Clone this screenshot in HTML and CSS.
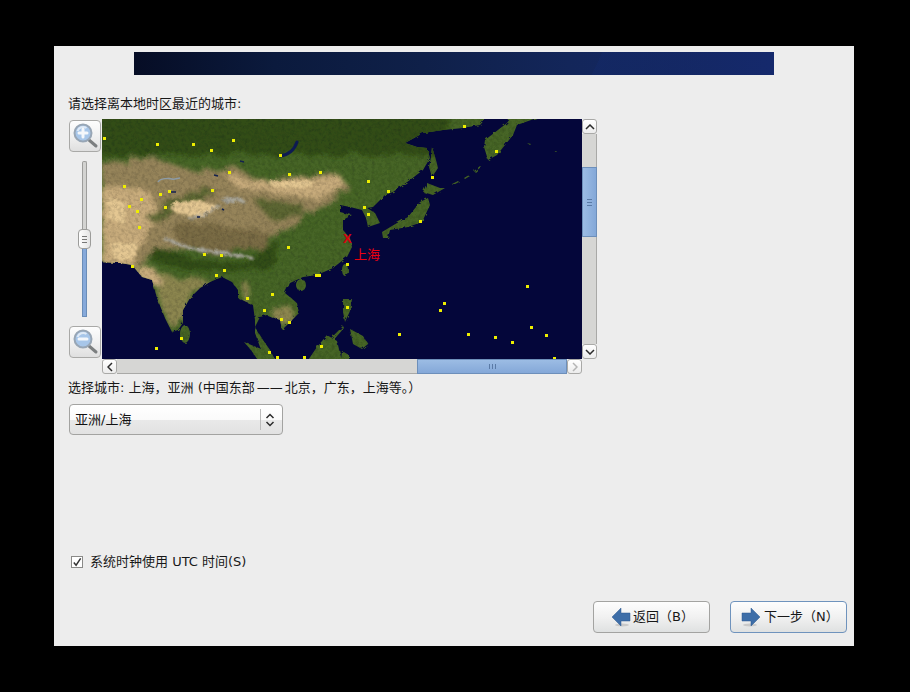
FILE: index.html
```html
<!DOCTYPE html>
<html lang="zh-CN">
<head>
<meta charset="utf-8">
<title>时区选择</title>
<link rel="stylesheet" href="styles.css">
</head>
<body>
<main class="panel">
  <div class="banner"></div>
  <p class="prompt">请选择离本地时区最近的城市:</p>
  <div class="map-area">
    <div class="zoom-col">
      <button class="zoom-btn" aria-label="放大">
        <svg width="28" height="28" viewBox="0 0 28 28"><path class="lens-handle" d="M18 18l7 6"/><circle class="lens-ring" cx="12" cy="11" r="8.500"/><path class="lens-shine" d="M6.500 9a6 6 0 0 1 9-3"/><path class="lens-mark" d="M12 7v8M8 11h8"/></svg>
      </button>
      <div class="slider">
        <div class="slider-top"></div>
        <div class="slider-handle"><span></span><span></span><span></span></div>
        <div class="slider-low"></div>
      </div>
      <button class="zoom-btn" aria-label="缩小">
        <svg width="28" height="28" viewBox="0 0 28 28"><path class="lens-handle" d="M18 18l7 6"/><circle class="lens-ring" cx="12" cy="11" r="8.500"/><path class="lens-shine" d="M6.500 9a6 6 0 0 1 9-3"/><path class="lens-mark" d="M8 11h8"/></svg>
      </button>
    </div>
    <div class="map-wrap">
      <div class="map-row">
        <div class="map">
          <svg class="map-svg" width="480" height="240" viewBox="0 0 480 240">
            <defs>
              <clipPath id="land">
                <path d="M-10-10H392L378 6 361 9 341 11 321 14 303 24 315 28 325 29 328 39 321 51 308 61 291 73 283 76 271 88 265 89 273 94 278 104 266 108 264 99 260 91 248 88 238 86 238 93 250 96 241 101 241 111 248 119 250 128 245 138 241 141 231 149 215 156 201 158 188 164 183 174 195 184 197 194 188 203 180 211 178 201 165 196 158 198 153 208 161 221 168 231 178 250H172L158 228 153 214 153 201 151 186 136 179 136 171 130 163 120 158 108 163 98 169 88 179 81 191 81 204 76 211 70 213 63 199 55 179 50 161 40 158 30 146 18 144-10 143Z"/>
                <ellipse cx="83" cy="215" rx="5" ry="9"/>
                <ellipse cx="199" cy="166" rx="5" ry="6"/>
                <ellipse cx="243" cy="151" rx="3" ry="6"/>
                <path d="M241 180 250 180 248 192 243 203 241 193Z"/>
                <path d="M248 210 261 217 266 225 260 230 251 225Z"/>
                <path d="M228 220 241 207 242 209 230 223Z"/>
                <path d="M225 216 235 222 242 250H200L215 228Z"/>
                <path d="M142 223 169 234 179 250H162L149 231Z"/>
                <path d="M240 232 247 236V250H238Z"/>
                <path d="M280 113 295 104 306 98 318 83 326 79 328 86 320 103 306 108 288 111 286 119 281 119Z"/>
                <path d="M321 73 325 64 338 69 343 69 331 76Z"/>
                <path d="M330 28 334 41 336 49 330 58 327 48 329 38Z"/>
                <path d="M383 21 405 4 415-10H460L415 6 411 16 395 36 386 41 382 28Z"/>
                <path d="M350 65 356 62 357 63 351 66ZM362 59 367 56 368 57 363 60ZM372 52 378 47 379 48 373 53ZM425 24 429 25 428 26ZM452 32 456 33 455 34Z"/>
              </clipPath>
              <filter id="coast" x="-2%" y="-2%" width="104%" height="104%">
                <feTurbulence type="fractalNoise" baseFrequency=".22" numOctaves="2" seed="7" result="n"/>
                <feDisplacementMap in="SourceGraphic" in2="n" scale="3"/>
              </filter>
              <filter id="rough" x="-5%" y="-5%" width="110%" height="110%">
                <feTurbulence type="fractalNoise" baseFrequency=".07" numOctaves="3" seed="4" result="n"/>
                <feDisplacementMap in="SourceGraphic" in2="n" scale="12" result="d"/>
                <feGaussianBlur in="d" stdDeviation="2.200"/>
              </filter>
              <filter id="fine" x="-5%" y="-5%" width="110%" height="110%">
                <feTurbulence type="fractalNoise" baseFrequency=".16" numOctaves="2" seed="12" result="n"/>
                <feDisplacementMap in="SourceGraphic" in2="n" scale="6" result="d"/>
                <feGaussianBlur in="d" stdDeviation="1"/>
              </filter>
              <filter id="speckle" x="0" y="0" width="100%" height="100%">
                <feTurbulence type="fractalNoise" baseFrequency=".3" numOctaves="2" seed="9"/>
                <feColorMatrix values="0 0 0 0 0 0 0 0 0 0 0 0 0 0 0 1.600 0 0 0 -.62"/>
              </filter>
            </defs>
            <rect class="ocean" width="480" height="240"/>
            <g filter="url(#coast)">
              <g clip-path="url(#land)">
                <rect class="land-green" x="-10" y="-10" width="490" height="260"/>
                <g filter="url(#rough)">
                  <rect class="land-forest" x="-10" y="-10" width="355" height="46"/>
                  <path class="land-steppe" d="M0 44 50 38 100 54 130 46 160 62 230 54 248 68 228 85 205 97 180 114 150 127 100 132 60 130 40 146 0 147Z"/>
                  <path class="land-tan" d="M0 66 48 72 56 100 40 122 30 146 0 146Z"/>
                  <path class="land-tan" d="M120 54 165 64 238 56 244 66 215 80 185 76 135 68Z"/>
                  <path class="land-dry" d="M70 104 110 106 170 114 158 130 100 134 76 124Z"/>
                  <path class="land-moss" d="M42 96 72 80 105 68 112 72 80 90 52 104Z"/>
                  <path class="land-moss" d="M150 80 200 84 204 96 170 102Z"/>
                  <path class="land-forest" d="M52 128 100 142 150 144 160 128 180 122 170 150 90 152 50 142Z"/>
                  <path class="land-olive" d="M58 156 100 160 110 164 90 176 78 208 68 208 55 176Z"/>
                  <path class="land-tan" d="M26 148 52 148 62 166 48 166Z"/>
                  <path class="land-olive" d="M168 190 188 186 192 198 180 208 172 204Z"/>
                  <path class="land-olive" d="M140 162 146 162 148 182 140 184Z"/>
                </g>
                <g filter="url(#fine)">
                  <ellipse class="land-pale" cx="92" cy="89" rx="23" ry="7.500"/>
                  <path class="land-rock" d="M86 98c12 0 22-8 32-12l1 2c-10 5-20 12-33 12Z"/>
                  <path class="land-rock" d="M62 118 90 128 125 133 152 138 150 140 120 136 85 130 60 120Z"/>
                  <path class="land-rock" d="M118 80 138 78 144 83 124 84Z"/>
                  <path class="land-pale" d="M166 62 212 62 202 70 170 67Z"/>
                  <path class="land-pale" d="M6 78 24 84 22 104 6 100Z"/>
                  <path class="land-pale" d="M8 124 36 124 32 140 12 140Z"/>
                </g>
                <rect class="speckle" x="-10" y="-10" width="490" height="260" filter="url(#speckle)"/>
              </g>
            </g>
            <path class="lake" d="M178 37c8-1 14-5 17-14"/>
            <path class="lake-grey" d="M56 63c2-4 12-4 14-3s6-1 8-1"/>
            <path class="lake-thin" d="M66 73h8M112 56l4 1M138 42l4 1M95 98h3M120 90l2 1"/>
            <path class="city-dots" d="M1 18h3v3h-3zM54 24h3v3h-3zM90 24h3v3h-3zM108 30h3v3h-3zM130 20h3v3h-3zM177 35h3v3h-3zM126 52h3v3h-3zM186 54h3v3h-3zM217 52h3v3h-3zM21 66h3v3h-3zM66 71h3v3h-3zM109 70h3v3h-3zM57 74h3v3h-3zM38 79h3v3h-3zM26 86h3v3h-3zM62 87h3v3h-3zM34 91h3v3h-3zM36 107h3v3h-3zM185 127h3v3h-3zM244 144h3v3h-3zM101 134h3v3h-3zM118 135h3v3h-3zM29 146h3v3h-3zM121 150h3v3h-3zM113 155h3v3h-3zM213 155h3v3h-3zM216 155h3v3h-3zM169 174h3v3h-3zM144 178h3v3h-3zM161 190h3v3h-3zM178 199h3v3h-3zM186 202h3v3h-3zM244 187h3v3h-3zM78 218h3v3h-3zM53 228h3v3h-3zM218 226h3v3h-3zM166 232h3v3h-3zM174 237h3v3h-3zM201 237h3v3h-3zM361 6h3v3h-3zM393 31h3v3h-3zM265 61h3v3h-3zM329 57h3v3h-3zM285 71h3v3h-3zM261 87h3v3h-3zM265 94h3v3h-3zM317 101h3v3h-3zM424 166h3v3h-3zM341 183h3v3h-3zM337 190h3v3h-3zM296 214h3v3h-3zM365 214h3v3h-3zM392 217h3v3h-3zM409 222h3v3h-3zM428 207h3v3h-3zM443 215h3v3h-3zM451 238h3v3h-3z"/>
          </svg>
          <span class="pin">X</span>
          <span class="pin-label">上海</span>
        </div>
        <div class="vbar">
          <div class="sb-btn sb-btn-v"><svg width="10" height="6" viewBox="0 0 10 6"><path class="chev" d="M1 5l4-4 4 4"/></svg></div>
          <div class="track track-a"></div>
          <div class="thumb thumb-v"><span></span><span></span><span></span></div>
          <div class="track track-b"></div>
          <div class="sb-btn sb-btn-v"><svg width="10" height="6" viewBox="0 0 10 6"><path class="chev" d="M1 1l4 4 4-4"/></svg></div>
        </div>
      </div>
      <div class="hbar">
        <div class="sb-btn sb-btn-h"><svg width="6" height="10" viewBox="0 0 6 10"><path class="chev" d="M5 1L1 5l4 4"/></svg></div>
        <div class="track track-h"></div>
        <div class="thumb thumb-h"><span></span><span></span><span></span></div>
        <div class="sb-btn sb-btn-h"><svg width="6" height="10" viewBox="0 0 6 10"><path class="chev chev-off" d="M1 1l4 4-4 4"/></svg></div>
      </div>
    </div>
  </div>
  <p class="city">选择城市: 上海，亚洲 (中国东部<span class="dash">——</span>北京，广东，上海等。）</p>
  <div class="combo">
    <span class="combo-text">亚洲/上海</span>
    <span class="combo-arrows"><svg width="10" height="14" viewBox="0 0 10 14"><path class="chev" d="M1.500 5L5 1.500 8.500 5M1.500 9L5 12.500 8.500 9"/></svg></span>
  </div>
  <label class="utc">
    <span class="check"><svg width="11" height="11" viewBox="0 0 11 11"><path d="M2 5.500l2.500 3L9.500 1"/></svg></span>
    <span>系统时钟使用 UTC 时间(S)</span>
  </label>
  <div class="actions">
    <button class="nav-btn">
      <svg width="20" height="20" viewBox="0 0 20 20"><ellipse class="arrow-shadow" cx="11" cy="18" rx="7" ry="1.500"/><path class="arrow" d="M1 10l9-9v5h9v8h-9v5z"/></svg>
      <span>返回（B）</span>
    </button>
    <button class="nav-btn nav-btn-primary">
      <svg width="20" height="20" viewBox="0 0 20 20"><ellipse class="arrow-shadow" cx="9" cy="18" rx="7" ry="1.500"/><path class="arrow" d="M19 10l-9-9v5H1v8h9v5z"/></svg>
      <span>下一步（N）</span>
    </button>
  </div>
</main>
</body>
</html>
```

FILE: styles.css
```css
* { box-sizing: border-box; }
html, body { margin: 0; height: 100%; background: #000; }
body { padding: 46px 0 0 54px; overflow: hidden; }
button { font: inherit; color: inherit; padding: 0; cursor: default; }
p { margin: 0; }

.panel {
  width: 800px;
  height: 600px;
  background: #ededed;
  display: flex;
  flex-direction: column;
  padding: 6px 0 13px;
  font-family: "DejaVu Sans", "Noto Sans CJK SC", sans-serif;
  font-size: 13px;
  line-height: 16px;
  color: #181818;
}

.banner {
  width: 640px;
  height: 23px;
  margin-left: 80px;
  flex: none;
  background:
    linear-gradient(115deg, transparent 72%, rgba(20, 42, 108, .4) 72%, rgba(20, 42, 108, 0) 90%),
    linear-gradient(90deg, #060d25 0%, #0b1a3d 22%, #0f2049 45%, #13265a 68%, #15296c 100%);
}

.prompt { margin: 21px 0 0 14px; height: 16px; }

.map-area { display: flex; margin: 7px 0 0 15px; }

.zoom-col { width: 33px; display: flex; flex-direction: column; align-items: flex-start; padding-top: 1px; }
.zoom-btn {
  width: 32px;
  height: 32px;
  display: flex;
  align-items: center;
  justify-content: center;
  border: 1px solid #a9a9a7;
  border-radius: 4px;
  background: linear-gradient(#fdfdfd, #f1f1f1 50%, #dfdfdf);
}
.lens-handle { fill: none; stroke: #7c7f80; stroke-width: 3; stroke-linecap: round; }
.lens-ring { fill: #a7c6e9; stroke: #98a6b5; stroke-width: 2; }
.lens-shine { fill: none; stroke: #dfeaf6; stroke-width: 2; }
.lens-mark { fill: none; stroke: #f4f7fb; stroke-width: 3; stroke-linecap: round; }

.slider { width: 13px; height: 156px; margin: 9px 0 9px 9px; display: flex; flex-direction: column; align-items: center; }
.slider-top { width: 5px; height: 68px; border: 1px solid #9d9d9b; border-bottom: 0; border-radius: 2px 2px 0 0; background: #d3d3d1; }
.slider-handle {
  width: 13px;
  height: 20px;
  flex: none;
  display: flex;
  flex-direction: column;
  align-items: center;
  justify-content: center;
  gap: 2px;
  border: 1px solid #9c9c9a;
  border-radius: 4px;
  background: linear-gradient(90deg, #fdfdfd, #e4e4e4);
}
.slider-handle span { width: 5px; height: 1px; background: #777; }
.slider-low { width: 5px; flex: 1; border: 1px solid #6a8db8; border-top: 0; background: #86a9da; }

.map-row { display: flex; align-items: flex-start; }
.map { position: relative; width: 480px; height: 240px; overflow: hidden; }
.map-svg { display: block; }
.ocean { fill: #04063a; }
.land-green { fill: #466526; }
.land-forest { fill: #324e16; }
.land-moss { fill: #5b6630; }
.land-olive { fill: #8c8650; }
.land-steppe { fill: #96845a; }
.land-dry { fill: #7a6c44; }
.land-tan { fill: #c8ac7b; }
.land-pale { fill: #e4c792; }
.land-rock { fill: #a9a79c; }
.speckle { opacity: .22; }
.lake { fill: none; stroke: #0d1a52; stroke-width: 3; stroke-linecap: round; }
.lake-grey { fill: none; stroke: #8d9ba6; stroke-width: 1.500; }
.lake-thin { fill: none; stroke: #13214d; stroke-width: 1.500; }
.city-dots { fill: #eeee00; }
.pin {
  position: absolute;
  left: 241px;
  top: 112px;
  font: bold 13px/16px "Liberation Sans", sans-serif;
  color: #d8000f;
}
.pin-label {
  position: absolute;
  left: 252px;
  top: 128px;
  color: #ee0010;
}

.vbar { width: 15px; height: 240px; display: flex; flex-direction: column; }
.hbar { width: 480px; height: 15px; display: flex; }
.track { background: #d6d6d4; }
.track-a { height: 33px; border-right: 1px solid #a9a9a7; }
.track-b { flex: 1; border-right: 1px solid #a9a9a7; }
.track-h { flex: 1; border-bottom: 1px solid #a9a9a7; }
.sb-btn {
  display: flex;
  align-items: center;
  justify-content: center;
  flex: none;
  background: linear-gradient(#fff, #ececec);
  border: 1px solid #a9a9a7;
  border-radius: 3px;
}
.sb-btn-v { width: 15px; height: 15px; }
.sb-btn-h { width: 15px; height: 15px; }
.chev { fill: none; stroke: #2b2b2b; stroke-width: 1.500; }
.chev-off { stroke: #b5b5b5; }
.thumb {
  display: flex;
  align-items: center;
  justify-content: center;
  gap: 2px;
  flex: none;
  border: 1px solid #6d8fba;
}
.thumb-v { width: 15px; height: 70px; flex-direction: column; background: linear-gradient(90deg, #9cbce4, #84a8d8); }
.thumb-h { width: 150px; height: 15px; background: linear-gradient(#9cbce4, #84a8d8); }
.thumb-v span { width: 5px; height: 1px; background: #5a7aa6; }
.thumb-h span { width: 1px; height: 5px; background: #5a7aa6; }

.city { margin: 6px 0 0 14px; height: 16px; }
.dash { margin: 0 2px; }

.combo {
  width: 214px;
  height: 31px;
  margin: 8px 0 0 15px;
  display: flex;
  align-items: center;
  justify-content: space-between;
  padding: 0 6px 0 5px;
  border: 1px solid #a3a3a1;
  border-radius: 4px;
  background: linear-gradient(#fff, #fafafa 50%, #e9e9e9 52%, #e2e2e2);
}
.combo-text { color: #111; }
.combo-arrows { width: 16px; height: 21px; display: flex; align-items: center; justify-content: flex-end; border-left: 1px solid #bbb; padding-right: 1px; }

.utc { display: flex; align-items: center; margin: 119px 0 0 17px; height: 16px; gap: 7px; }
.check {
  width: 12px;
  height: 12px;
  display: flex;
  align-items: center;
  justify-content: center;
  border: 1px solid #8a8a88;
  background: #fff;
}
.check path { fill: none; stroke: #333; stroke-width: 1.600; }

.actions { margin: auto 7px 0 0; display: flex; justify-content: flex-end; gap: 20px; }
.nav-btn {
  width: 117px;
  height: 32px;
  display: flex;
  align-items: center;
  justify-content: flex-start;
  gap: 2px;
  padding-left: 17px;
  border: 1px solid #a3a3a1;
  border-radius: 4px;
  background: linear-gradient(#fdfdfd, #f1f1f1 50%, #dfe1e1);
}
.nav-btn-primary { border-color: #6f93bd; padding-left: 10px; gap: 3px; }
.arrow { fill: #3e6ea8; stroke: #2f5a90; stroke-width: .5; }
.arrow-shadow { fill: #c9c9c9; }
```
